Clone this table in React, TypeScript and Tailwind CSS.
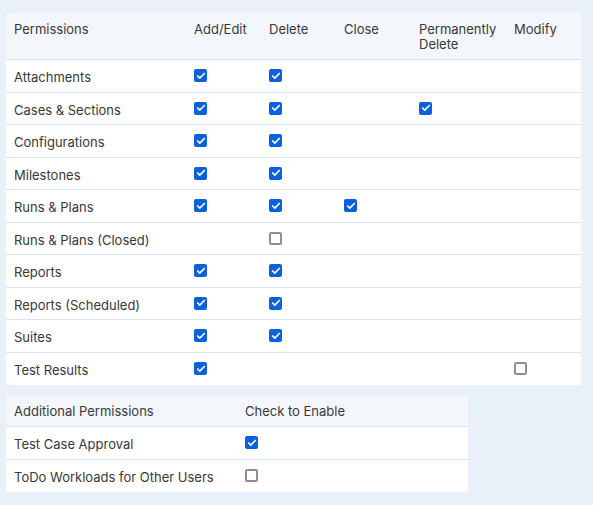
import { Check } from 'lucide-react'

type Row = { name: string; cells: (boolean | null)[] }

const columns = ['Add/Edit', 'Delete', 'Close', 'Permanently Delete', 'Modify']

const rows: Row[] = [
  { name: 'Attachments', cells: [true, true, null, null, null] },
  { name: 'Cases & Sections', cells: [true, true, null, true, null] },
  { name: 'Configurations', cells: [true, true, null, null, null] },
  { name: 'Milestones', cells: [true, true, null, null, null] },
  { name: 'Runs & Plans', cells: [true, true, true, null, null] },
  { name: 'Runs & Plans (Closed)', cells: [null, false, null, null, null] },
  { name: 'Reports', cells: [true, true, null, null, null] },
  { name: 'Reports (Scheduled)', cells: [true, true, null, null, null] },
  { name: 'Suites', cells: [true, true, null, null, null] },
  { name: 'Test Results', cells: [true, null, null, null, false] },
]

const extra = [
  { name: 'Test Case Approval', checked: true },
  { name: 'ToDo Workloads for Other Users', checked: false },
]

function Box({ checked }: { checked: boolean }) {
  if (checked) {
    return (
      <span className="flex h-[13px] w-[13px] items-center justify-center rounded-[2px] bg-[#0b61dc]">
        <Check className="h-[10px] w-[10px] text-white" strokeWidth={4} />
      </span>
    )
  }
  return <span className="block h-[13px] w-[13px] rounded-[2px] border-2 border-[#8f8c9e] bg-white" />
}

const grid = 'grid grid-cols-[180px_75px_75px_75px_95px_75px]'

export default function App() {
  return (
    <div
      className="min-h-[505px] w-[593px] bg-[#e9f0f7] pl-[6px] pt-[13px] text-[13px] text-[#383838]"
      style={{ fontFamily: 'Inter, "Noto Sans", sans-serif' }}
    >
      {/* Main permissions */}
      <div className="w-[575px] overflow-hidden rounded-t-[3px] bg-white">
        <div className={`${grid} h-[47px] border-b border-[#d4e3ef] bg-[#f3f7fc] pt-[9px] leading-[15px]`}>
          <div className="px-2">Permissions</div>
          {columns.map((c) => (
            <div key={c} className={c === 'Permanently Delete' ? 'w-[90px] px-2' : 'px-2'}>
              {c}
            </div>
          ))}
        </div>
        {rows.map((r, i) => (
          <div
            key={r.name}
            className={`${grid} h-[32.5px] items-center ${i < rows.length - 1 ? 'border-b border-[#d4e3ef]' : ''}`}
          >
            <div className="px-2 pt-[4px]">{r.name}</div>
            {r.cells.map((v, j) => (
              <div key={j} className="px-2">
                {v !== null && <Box checked={v} />}
              </div>
            ))}
          </div>
        ))}
      </div>

      {/* Additional permissions */}
      <div className="mt-[10px] w-[462px] overflow-hidden rounded-t-[3px] bg-white">
        <div className="grid h-[32px] grid-cols-2 items-center border-b border-[#d4e3ef] bg-[#f3f7fc]">
          <div className="px-2 pt-[2px]">Additional Permissions</div>
          <div className="px-2 pt-[2px]">Check to Enable</div>
        </div>
        {extra.map((e, i) => (
          <div
            key={e.name}
            className={`grid h-[32.5px] grid-cols-2 items-center ${i < extra.length - 1 ? 'border-b border-[#d4e3ef]' : ''}`}
          >
            <div className="px-2 pt-[4px]">{e.name}</div>
            <div className="px-2">
              <Box checked={e.checked} />
            </div>
          </div>
        ))}
      </div>
    </div>
  )
}
